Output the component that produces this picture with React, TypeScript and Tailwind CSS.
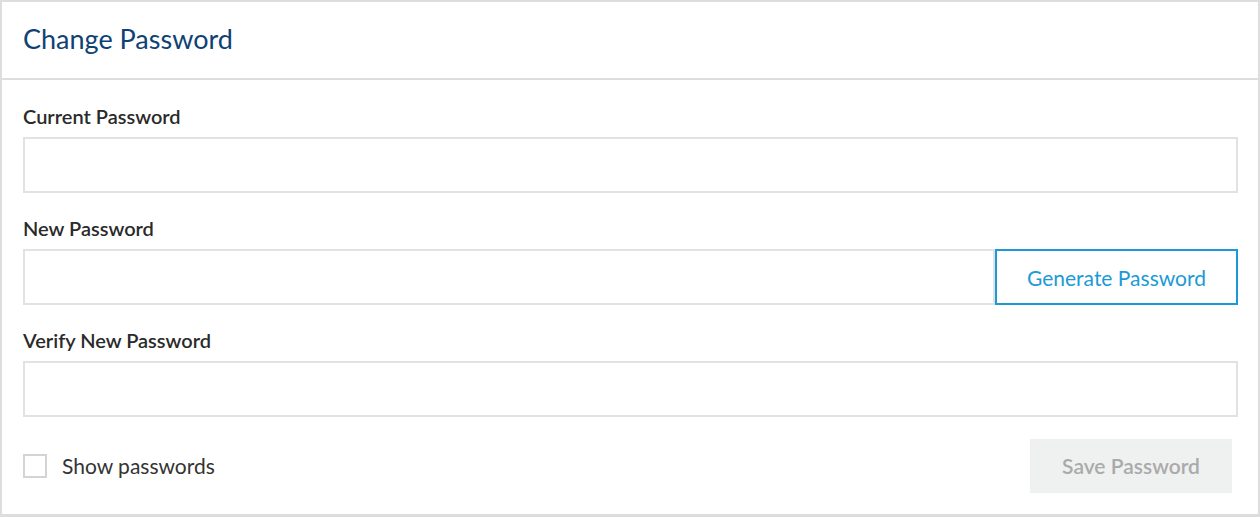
import React, { useState } from 'react';

const fields = [
  { id: 'current', label: 'Current Password' },
  { id: 'new', label: 'New Password', generate: true },
  { id: 'verify', label: 'Verify New Password' },
];

export default function App() {
  const [show, setShow] = useState(false);

  return (
    <div className="w-[1260px] h-[517px] bg-white font-['Lato','Liberation_Sans',sans-serif]">
      <div className="h-[517px] border-2 border-b-[3px] border-[#dddddd] flex flex-col">
        {/* Header */}
        <div className="h-[78px] shrink-0 border-b-2 border-[#dddddd] flex items-center pl-[21px] pb-[2px]">
          <h1 className="text-[27px] leading-[32px] text-[#0f4274]">Change Password</h1>
        </div>

        {/* Body */}
        <div className="pt-[25px] pl-[21px] pr-[20px] flex flex-col">
          {fields.map((f, i) => (
            <div key={f.id} className={i > 0 ? 'mt-[24px]' : ''}>
              <label htmlFor={f.id} className="block text-[20px] leading-[22px] font-semibold text-[#2a2a2a]">
                {f.label}
              </label>
              <div className="mt-[10px] flex h-[56px]">
                <input
                  id={f.id}
                  type={show ? 'text' : 'password'}
                  className="flex-1 min-w-0 h-full border-2 border-[#e2e2e2] px-3 text-[18px] outline-none"
                />
                {f.generate && (
                  <button className="w-[243px] shrink-0 h-full border-2 border-[#1b9ad6] text-[#1b9ad6] text-[21px] leading-none">
                    Generate Password
                  </button>
                )}
              </div>
            </div>
          ))}

          <div className="mt-[22px] flex items-center justify-between">
            <label className="flex items-center cursor-pointer">
              <span
                onClick={() => setShow(!show)}
                className="w-[24px] h-[24px] border-2 border-[#d4d4d4] bg-white"
              />
              <span className="ml-[15px] text-[21px] leading-[24px] text-[#333333]">Show passwords</span>
            </label>
            <button className="mr-[6px] w-[202px] h-[54px] bg-[#eff0f0] text-[#aaaaaa] text-[21px] font-semibold">
              Save Password
            </button>
          </div>
        </div>
      </div>
    </div>
  );
}
